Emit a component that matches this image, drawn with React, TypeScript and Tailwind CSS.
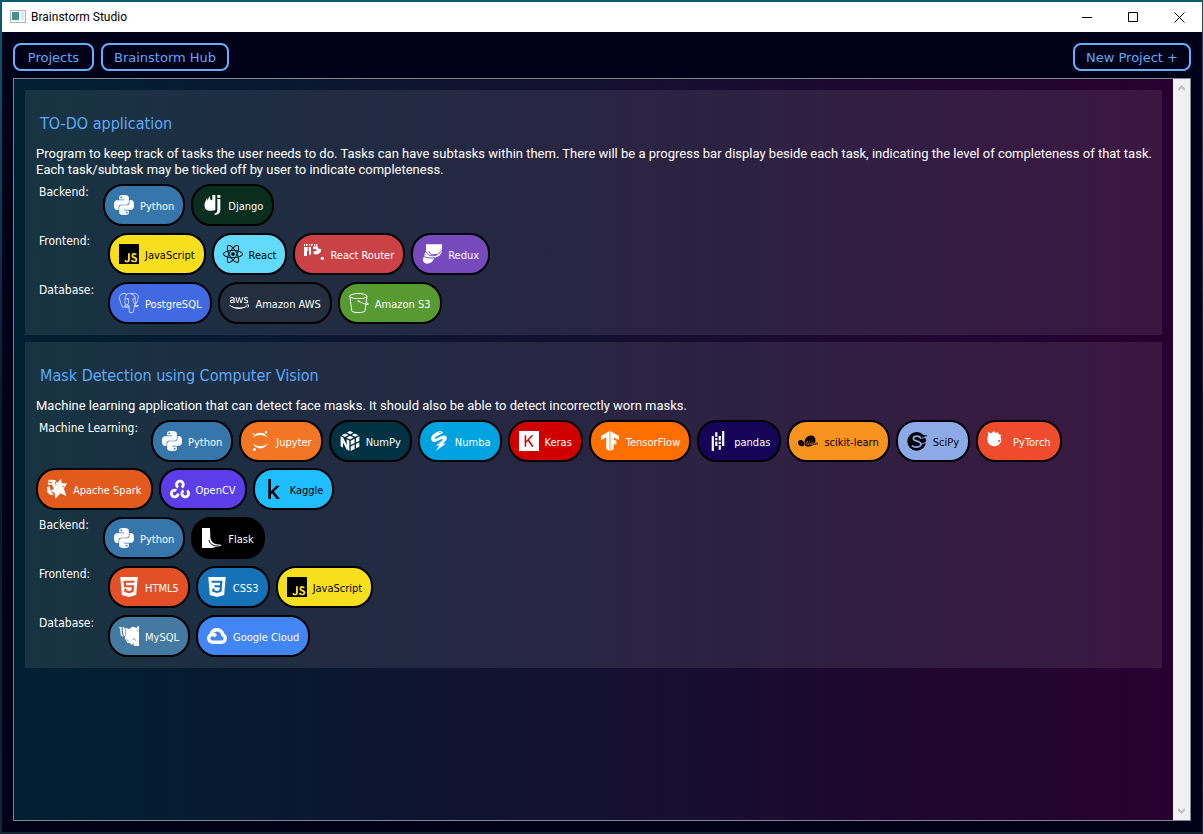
import type { ComponentType } from "react";
import {
  SiPython, SiJavascript, SiReact, SiPostgresql, SiAmazons3, SiJupyter, SiNumpy, SiNumba, SiKeras,
  SiTensorflow, SiPandas, SiScikitlearn, SiOpencv, SiHtml5, SiGooglecloud,
} from "react-icons/si";
import { FaAws, FaKaggle } from "react-icons/fa";

type IconProps = { className?: string };
type Tech = { name: string; icon: ComponentType<IconProps>; tone: string };
type Category = { label: string; width: string; items: Tech[] };
type Project = { title: string; description: string; categories: Category[] };

function DjangoIcon({ className }: IconProps) {
  return (
    <svg className={className} viewBox="0 0 60 60" fill="currentColor" aria-hidden="true">
      <path d="M11 18L15 9L17 17L22 3L26 15L31 16V0H40V45C29 49 15 48 10 41C6 33 7 24 11 18Z" />
      <path d="M46 0H55V8H46ZM46 12H55V44C55 54 49 59 38 60L37 56C43 55 46 52 46 46Z" />
    </svg>
  );
}

function ReactRouterIcon({ className }: IconProps) {
  return (
    <svg className={className} viewBox="0 0 60 60" fill="currentColor" aria-hidden="true">
      <path d="M0 0H3V6H0ZM6 0H12V3H9V6H6ZM15 0H18V6H15ZM21 0H27V3H24V6H21ZM30 0H33V6H30ZM35 0H40V5H35Z" />
      <path d="M0 9H11V21H9V36H0ZM14 9H21V32H15V20H14Z" />
      <path d="M27 8L40 6L44 14L51 15V23L42 31H29V22L38 21L36 15H27Z" />
      <circle cx="55" cy="43" r="5" />
    </svg>
  );
}

function ReduxIcon({ className }: IconProps) {
  return (
    <svg className={className} viewBox="0 0 60 60" aria-hidden="true">
      <path fill="currentColor" d="M12 1H60V20C59 32 49 39 36 42C35 51 28 58 15 59C6 58 1 51 3 44C5 39 8 36 8 30L12 20Z" />
      <path fill="none" stroke="#764abc" strokeWidth="3" d="M10 21C18 39 42 42 60 19M20 22C24 31 32 34 40 32M7 38C16 42 28 43 38 41" />
      <circle cx="41" cy="32" r="3" fill="#764abc" />
    </svg>
  );
}

function SciPyIcon({ className }: IconProps) {
  return (
    <svg className={className} viewBox="0 0 60 60" fill="none" aria-hidden="true">
      <circle cx="29" cy="31" r="28" fill="currentColor" />
      <path stroke="#8caae6" strokeWidth="5" d="M42 23C38 13 20 13 19 23C18 32 43 29 42 40C40 50 23 51 14 44" />
      <path stroke="#8caae6" strokeWidth="3" d="M44 22L60 18M42 40L60 33" />
      <path stroke="currentColor" strokeWidth="3" d="M47 15L60 14" />
    </svg>
  );
}

function PyTorchIcon({ className }: IconProps) {
  return (
    <svg className={className} viewBox="0 0 60 60" aria-hidden="true">
      <path fill="currentColor" d="M4 12L2 3L13 7L21 0L25 6L33 4L35 10L43 12L40 17C46 26 42 38 33 43C24 48 10 46 4 37C-1 29 0 19 4 12Z" />
      <path fill="#ee4c2c" d="M33 28l6-1-1 5-5 1z" />
    </svg>
  );
}

function SparkIcon({ className }: IconProps) {
  return (
    <svg className={className} viewBox="0 0 60 60" aria-hidden="true">
      <path fill="currentColor" d="M5 2L25 3L30 12L42 0L44 13L60 13L51 29L58 52L41 43L25 59L23 42L10 36L20 30L15 17L2 17Z" />
      <path fill="currentColor" d="M0 25L8 22L12 38L21 49L9 47L1 40Z" />
      <path fill="none" stroke="#e25a1c" strokeWidth="3" d="M4 9L16 12M24 8L27 17M46 22L53 24M10 24L19 27" />
    </svg>
  );
}

function FlaskIcon({ className }: IconProps) {
  return (
    <svg className={className} viewBox="0 0 60 60" aria-hidden="true">
      <path fill="currentColor" d="M0 0H24L25 30C28 43 38 51 60 50C53 56 40 56 30 60H0Z" />
      <path fill="none" stroke="#000" strokeWidth="3" d="M21 36C23 47 32 55 50 54" />
    </svg>
  );
}

function Css3Icon({ className }: IconProps) {
  return (
    <svg className={className} viewBox="0 0 24 24" fill="currentColor" aria-hidden="true">
      <path d="M1.5 0h21l-1.91 21.563L11.977 24l-8.565-2.438L1.5 0zm17.09 4.413L5.41 4.41l.213 2.622 10.125.002-.255 2.716h-6.64l.24 2.573h6.182l-.366 3.523-2.91.804-2.956-.81-.188-2.11h-2.61l.29 3.855L12 19.288l5.373-1.53L18.59 4.414z" />
    </svg>
  );
}

function MySqlIcon({ className }: IconProps) {
  return (
    <svg className={className} viewBox="0 0 60 60" aria-hidden="true">
      <path fill="currentColor" d="M0 2L8 4L9 24L14 34L5 28L4 12ZM11 2L17 5L20 33L13 27Z" />
      <path fill="currentColor" d="M19 5L30 9L40 2L54 5L56 0H60V60H45L43 52L37 57L33 51L25 50L17 36L21 30Z" />
      <path fill="none" stroke="#4479a1" strokeWidth="2" d="M40 40L46 38L50 44M52 12L58 16M22 42L29 43" />
    </svg>
  );
}

const python: Tech = { name: "Python", icon: SiPython, tone: "bg-[#3776ab] text-white" };
const javascript: Tech = { name: "JavaScript", icon: SiJavascript, tone: "bg-[#f7df1e] text-black" };

const projects: Project[] = [
  {
    title: "TO-DO application",
    description:
      "Program to keep track of tasks the user needs to do. Tasks can have subtasks within them. There will be a progress bar display beside each task, indicating the level of completeness of that task. Each task/subtask may be ticked off by user to indicate completeness.",
    categories: [
      {
        label: "Backend:",
        width: "w-[53px]",
        items: [python, { name: "Django", icon: DjangoIcon, tone: "bg-[#092e20] text-white" }],
      },
      {
        label: "Frontend:",
        width: "w-[58px]",
        items: [
          javascript,
          { name: "React", icon: SiReact, tone: "bg-[#61dafb] text-black" },
          { name: "React Router", icon: ReactRouterIcon, tone: "bg-[#ca4245] text-white" },
          { name: "Redux", icon: ReduxIcon, tone: "bg-[#764abc] text-white" },
        ],
      },
      {
        label: "Database:",
        width: "w-[58px]",
        items: [
          { name: "PostgreSQL", icon: SiPostgresql, tone: "bg-[#4169e1] text-white" },
          { name: "Amazon AWS", icon: FaAws, tone: "bg-[#232f3e] text-white" },
          { name: "Amazon S3", icon: SiAmazons3, tone: "bg-[#569a31] text-white" },
        ],
      },
    ],
  },
  {
    title: "Mask Detection using Computer Vision",
    description:
      "Machine learning application that can detect face masks. It should also be able to detect incorrectly worn masks.",
    categories: [
      {
        label: "Machine Learning:",
        width: "w-[101px]",
        items: [
          python,
          { name: "Jupyter", icon: SiJupyter, tone: "bg-[#f37626] text-white" },
          { name: "NumPy", icon: SiNumpy, tone: "bg-[#013243] text-white" },
          { name: "Numba", icon: SiNumba, tone: "bg-[#00a3e0] text-white" },
          { name: "Keras", icon: SiKeras, tone: "bg-[#d00000] text-white" },
          { name: "TensorFlow", icon: SiTensorflow, tone: "bg-[#ff6f00] text-white" },
          { name: "pandas", icon: SiPandas, tone: "bg-[#150458] text-white" },
          { name: "scikit-learn", icon: SiScikitlearn, tone: "bg-[#f7931e] text-black" },
          { name: "SciPy", icon: SciPyIcon, tone: "bg-[#8caae6] text-black" },
          { name: "PyTorch", icon: PyTorchIcon, tone: "bg-[#ee4c2c] text-white" },
          { name: "Apache Spark", icon: SparkIcon, tone: "bg-[#e25a1c] text-white" },
          { name: "OpenCV", icon: SiOpencv, tone: "bg-[#5c3ee8] text-white" },
          { name: "Kaggle", icon: FaKaggle, tone: "bg-[#20beff] text-black" },
        ],
      },
      {
        label: "Backend:",
        width: "w-[53px]",
        items: [python, { name: "Flask", icon: FlaskIcon, tone: "bg-black text-white" }],
      },
      {
        label: "Frontend:",
        width: "w-[58px]",
        items: [
          { name: "HTML5", icon: SiHtml5, tone: "bg-[#e34f26] text-white" },
          { name: "CSS3", icon: Css3Icon, tone: "bg-[#1572b6] text-white" },
          javascript,
        ],
      },
      {
        label: "Database:",
        width: "w-[58px]",
        items: [
          { name: "MySQL", icon: MySqlIcon, tone: "bg-[#4479a1] text-white" },
          { name: "Google Cloud", icon: SiGooglecloud, tone: "bg-[#4285f4] text-white" },
        ],
      },
    ],
  },
];

function TechPill({ tech }: { tech: Tech }) {
  const Icon = tech.icon;
  return (
    <li className={`flex h-[42px] items-center gap-1.5 rounded-[20px] border-2 border-black px-[9px] text-[11px] ${tech.tone}`}>
      <Icon className="size-5 shrink-0" />
      <span className="pt-1 whitespace-nowrap">{tech.name}</span>
    </li>
  );
}

function ProjectCard({ project }: { project: Project }) {
  return (
    <article className="bg-white/9 p-[11px] text-white">
      <h2 className="px-1 py-3 text-[16px] leading-[21px] text-[#5eaaf8]">{project.title}</h2>
      <p className="-mr-2 mb-1.5 font-[Roboto,sans-serif] text-[13px] leading-4">{project.description}</p>
      <div className="flex flex-col gap-[7px]">
        {project.categories.map((category) => (
          <section key={category.label} className="flex flex-wrap gap-1.5">
            <h3 className={`mr-2 pl-[3px] text-[12px] leading-4 whitespace-nowrap ${category.width}`}>{category.label}</h3>
            {/* The list joins its parent's wrapping row so that later lines start at the left edge. */}
            <ul className="contents">
              {category.items.map((tech) => (
                <TechPill key={tech.name} tech={tech} />
              ))}
            </ul>
          </section>
        ))}
      </div>
    </article>
  );
}

function NavButton({ children }: { children: string }) {
  return (
    <button className="h-7 min-w-[81px] rounded-lg border-2 border-[#64b0ff] px-[11px] font-['DejaVu_Sans',sans-serif] text-[13px] leading-none text-[#5eaaf8]">
      {children}
    </button>
  );
}

function TitleBar() {
  return (
    <header className="flex h-[30px] items-center bg-white pl-2 text-black">
      <svg className="mr-[5px] size-4" viewBox="0 0 16 16" aria-hidden="true">
        <rect x="0.5" y="1.5" width="15" height="12" fill="#f4f6f7" stroke="#b4b8bc" />
        <rect x="2" y="3" width="7" height="8" fill="#4a8f8c" />
        <rect x="11" y="3" width="3" height="8" fill="#dfe6e6" />
      </svg>
      <h1 className="flex-1 font-[Roboto,sans-serif] text-[12px]">Brainstorm Studio</h1>
      <button aria-label="Minimize" className="grid h-full w-[46px] place-items-center">
        <svg className="size-[11px]" viewBox="0 0 11 11" stroke="currentColor"><path d="M0 5.5h10" /></svg>
      </button>
      <button aria-label="Maximize" className="grid h-full w-[46px] place-items-center">
        <svg className="size-[11px]" viewBox="0 0 11 11" stroke="currentColor" fill="none"><path d="M.5.5h9v9h-9z" /></svg>
      </button>
      <button aria-label="Close" className="grid h-full w-[46px] place-items-center">
        <svg className="size-[11px]" viewBox="0 0 11 11" stroke="currentColor"><path d="M.5.5l10 10M10.5.5l-10 10" /></svg>
      </button>
    </header>
  );
}

export default function App() {
  return (
    <div className="flex min-h-screen flex-col bg-linear-to-b/srgb from-[#0b5a70] via-[#051c2c] to-[#0a2a3c] p-0.5 pr-px font-['DejaVu_Sans_Condensed','Noto_Sans',sans-serif]">
      <div className="flex flex-1 flex-col bg-[#000018]">
        <TitleBar />
        <main className="flex flex-1 flex-col p-[11px]">
          <nav className="mb-[7px] flex gap-[7px]">
            <NavButton>Projects</NavButton>
            <NavButton>Brainstorm Hub</NavButton>
            <div className="flex-1" />
            <NavButton>New Project +</NavButton>
          </nav>
          <div className="flex flex-1 border border-[#828790]">
            <div className="flex flex-1 flex-col gap-[7px] bg-linear-to-r/srgb from-[#002030] to-[#280030] p-[11px]">
              {projects.map((project) => (
                <ProjectCard key={project.title} project={project} />
              ))}
            </div>
            <div className="flex w-[17px] flex-col items-center justify-between bg-[#f0f0f0] py-1.5" aria-hidden="true">
              <svg className="size-[7px]" viewBox="0 0 7 7" fill="none" stroke="#bfbfbf" strokeWidth="2"><path d="M0 5l3.500-3.500L7 5" /></svg>
              <svg className="size-[7px]" viewBox="0 0 7 7" fill="none" stroke="#bfbfbf" strokeWidth="2"><path d="M0 2l3.500 3.500L7 2" /></svg>
            </div>
          </div>
        </main>
      </div>
    </div>
  );
}
